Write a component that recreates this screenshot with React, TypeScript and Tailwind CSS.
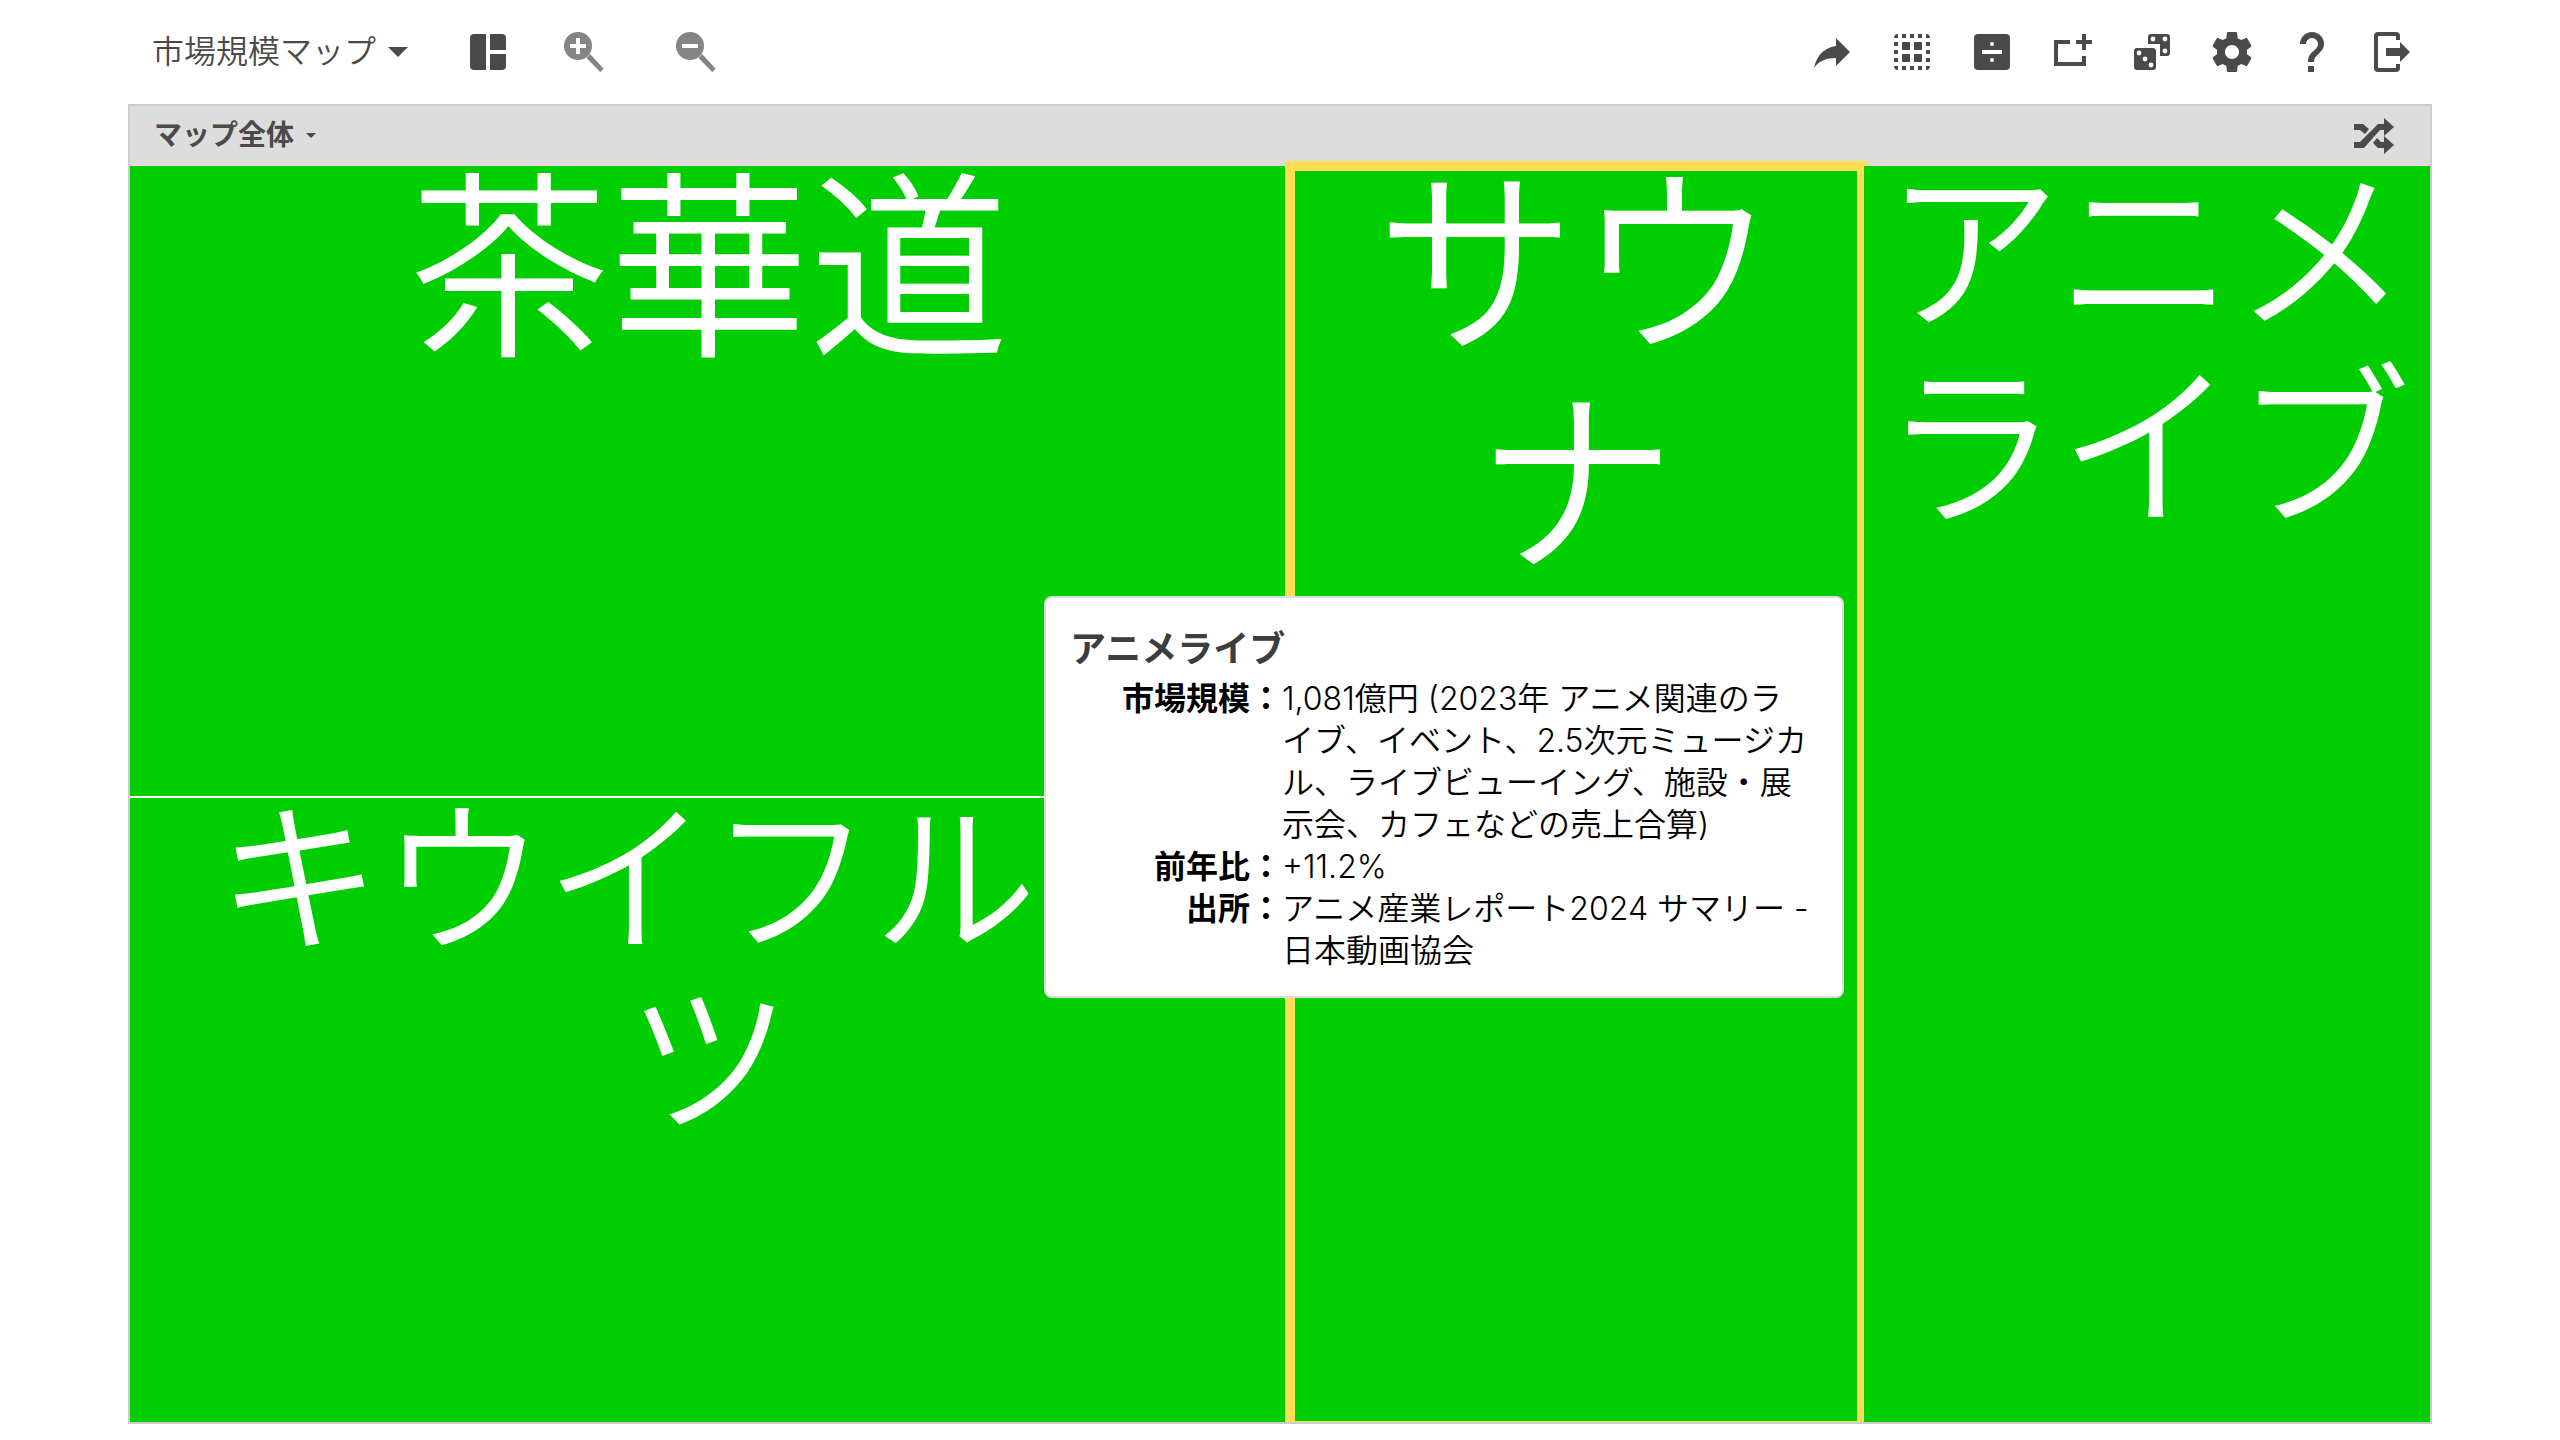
import type { ReactNode } from "react";

const Icon = ({ children }: { children: ReactNode }) => (
	<svg viewBox="0 0 48 48" fill="currentColor" fillRule="evenodd" aria-hidden="true" className="size-12 shrink-0">
		{children}
	</svg>
);

const gearPath =
	"M38.86 25.95c.08-.64.14-1.29.14-1.95s-.06-1.31-.14-1.95l4.23-3.31c.38-.3.49-.84.24-1.28l-4-6.93c-.25-.43-.77-.61-1.22-.43l-4.98 2.01c-1.03-.79-2.16-1.46-3.38-1.97L29 4.84c-.09-.47-.5-.84-1-.84h-8c-.5 0-.91.37-.99.84l-.75 5.3c-1.22.51-2.35 1.17-3.38 1.97L9.9 10.1c-.45-.17-.97 0-1.22.43l-4 6.93c-.25.43-.14.97.24 1.28l4.22 3.31C9.06 22.69 9 23.34 9 24s.06 1.31.14 1.95l-4.22 3.31c-.38.3-.49.84-.24 1.28l4 6.93c.25.43.77.61 1.22.43l4.98-2.01c1.03.79 2.16 1.46 3.38 1.97l.75 5.3c.08.47.49.84.99.84h8c.5 0 .91-.37.99-.84l.75-5.3c1.22-.51 2.35-1.17 3.38-1.97l4.98 2.01c.45.17.97 0 1.22-.43l4-6.93c.25-.43.14-.97-.24-1.28l-4.22-3.31zM24 31c-3.87 0-7-3.13-7-7s3.13-7 7-7 7 3.13 7 7-3.13 7-7 7z";

const tools = [
	{
		label: "共有",
		icon: <path d="M28 18v-8l14 14-14 14v-8c-10 0-17 3-22 10 2-10 8-20 22-22z" />,
	},
	{
		label: "選択",
		icon: (
			<>
				<path d="M10 6v4H6a4 4 0 0 1 4-4zM38 6a4 4 0 0 1 4 4h-4zM6 38h4v4a4 4 0 0 1-4-4zM38 38h4a4 4 0 0 1-4 4z" />
				<path d="M14 6h4v4h-4zM22 6h4v4h-4zM30 6h4v4h-4zM14 38h4v4h-4zM22 38h4v4h-4zM30 38h4v4h-4z" />
				<path d="M6 14h4v4H6zM6 22h4v4H6zM6 30h4v4H6zM38 14h4v4h-4zM38 22h4v4h-4zM38 30h4v4h-4z" />
				<path d="M14 14h8v8h-8zM26 14h8v8h-8zM14 26h8v8h-8zM26 26h8v8h-8z" />
			</>
		),
	},
	{
		label: "分割",
		icon: (
			<path d="M10 6h28a4 4 0 0 1 4 4v28a4 4 0 0 1-4 4H10a4 4 0 0 1-4-4V10a4 4 0 0 1 4-4zM14 22v4h20v-4zM24 14a2 2 0 1 0 0 4 2 2 0 0 0 0-4zM24 30a2 2 0 1 0 0 4 2 2 0 0 0 0-4z" />
		),
	},
	{
		label: "枠を追加",
		icon: <path d="M6 12h16v4H10v18h24v-6h4v10H6zM34 6h4v6h6v4h-6v6h-4v-6h-6v-4h6z" />,
	},
	{
		label: "ランダム",
		icon: (
			<>
				<path d="M9 20h16a3 3 0 0 1 3 3v16a3 3 0 0 1-3 3H9a3 3 0 0 1-3-3V23a3 3 0 0 1 3-3z" />
				<path d="M23 6h16a3 3 0 0 1 3 3v16a3 3 0 0 1-3 3h-7V16H20V9a3 3 0 0 1 3-3z" />
				<g fill="#fff">
					<circle cx="11" cy="25" r="2.4" />
					<circle cx="17" cy="31" r="2.4" />
					<circle cx="23" cy="37" r="2.4" />
					<circle cx="25" cy="11" r="2.4" />
					<circle cx="37" cy="11" r="2.4" />
					<circle cx="37" cy="23" r="2.4" />
				</g>
			</>
		),
	},
	{ label: "設定", icon: <path d={gearPath} /> },
	{
		label: "ヘルプ",
		icon: <path d="M20 38h6v6h-6zM12 16a12 12 0 0 1 24 0c0 9-10 10-10 18h-6c0-11 10-11 10-18a6 6 0 0 0-12 0z" />,
	},
	{
		label: "ログアウト",
		icon: (
			<path d="M10 4h18a4 4 0 0 1 4 4v4h-4V9a1 1 0 0 0-1-1H11a1 1 0 0 0-1 1v30a1 1 0 0 0 1 1h16a1 1 0 0 0 1-1v-3h4v4a4 4 0 0 1-4 4H10a4 4 0 0 1-4-4V8a4 4 0 0 1 4-4zM18 20h14v-6l10 10-10 10v-6H18z" />
		),
	},
];

const details = [
	{
		term: "市場規模",
		text: "1,081億円 (2023年 アニメ関連のラ\nイブ、イベント、2.5次元ミュージカル、ライブビューイング、施設・展示会、カフェなどの売上合算)",
	},
	{ term: "前年比", text: "+11.2%" },
	{ term: "出所", text: "アニメ産業レポート2024 サマリー - 日本動画協会" },
];

const Toolbar = () => (
	<header className="flex h-[104px] items-center pr-4 pl-6">
		<button type="button" className="flex items-center gap-3 text-[32px] font-[350]">
			市場規模マップ
			<svg viewBox="0 0 20 10" fill="currentColor" aria-hidden="true" className="h-[10px] w-5">
				<path d="M0 0h20L10 10z" />
			</svg>
		</button>
		<button type="button" aria-label="レイアウト" className="ml-14">
			<Icon>
				<path d="M10 6h12v36H10a4 4 0 0 1-4-4V10a4 4 0 0 1 4-4zM26 6h12a4 4 0 0 1 4 4v12H26zM26 26h16v12a4 4 0 0 1-4 4H26z" />
			</Icon>
		</button>
		<button type="button" aria-label="拡大" className="ml-12 text-[#848484]">
			<Icon>
				<path d="M18 4a14 14 0 1 0 0 28 14 14 0 0 0 0-28zM16 10h4v6h6v4h-6v6h-4v-6h-6v-4h6z" />
				<path d="M26.5 30l3.5-4 13.7 14.7-3.4 3.3z" />
			</Icon>
		</button>
		<button type="button" aria-label="縮小" className="ml-16 text-[#848484]">
			<Icon>
				<path d="M18 4a14 14 0 1 0 0 28 14 14 0 0 0 0-28zM10 16h16v4H10z" />
				<path d="M26.5 30l3.5-4 13.7 14.7-3.4 3.3z" />
			</Icon>
		</button>
		<div className="ml-auto flex gap-8">
			{tools.map((tool) => (
				<button key={tool.label} type="button" aria-label={tool.label}>
					<Icon>{tool.icon}</Icon>
				</button>
			))}
		</div>
	</header>
);

const Tooltip = () => (
	<div
		role="tooltip"
		className="absolute top-[430px] left-[914px] z-20 w-[800px] rounded-lg border-2 border-[#ddd] bg-white px-6 pt-6 pb-6 text-left text-black"
	>
		<h2 className="text-[36px] leading-[54px] font-bold text-[#3d3d3d]">アニメライブ</h2>
		<dl className="mt-[2px] grid grid-cols-[212px_1fr] text-[32px] leading-[42px]">
			{details.map(({ term, text }) => (
				<div key={term} className="contents">
					<dt className="text-right font-bold">{term}：</dt>
					<dd className="font-[350] whitespace-pre-line">{text}</dd>
				</div>
			))}
		</dl>
	</div>
);

export default function App() {
	return (
		<div className="flex min-h-screen flex-col bg-white px-32 pb-4 font-['Inter','Noto_Sans_CJK_JP',sans-serif] text-[#4a4a4a]">
			<Toolbar />
			<main className="flex grow flex-col border-2 border-[#ccc]">
				<div className="flex h-[60px] items-center justify-between bg-[#ddd] pr-8 pl-6">
					<button type="button" className="flex items-center gap-3 pb-[2px] text-[28px] font-bold">
						マップ全体
						<svg viewBox="0 0 10 5" fill="currentColor" aria-hidden="true" className="h-[5px] w-[10px]">
							<path d="M0 0h10L5 5z" />
						</svg>
					</button>
					<button type="button" aria-label="シャッフル">
						<Icon>
							<path d="M4 30h6l18-18h6V6l10 9-10 9v-6h-4L14 36H4zM4 12h9l6 5-4 5-5-4H4zM23 31l4-5 4 4h3v-6l10 9-10 9v-6h-6z" />
						</Icon>
					</button>
				</div>
				<div className="relative grid grow grid-cols-[1158fr_576fr_566fr] text-center font-[350] text-white">
					<div className="grid grid-rows-[632fr_624fr]">
						<section className="border-b-2 border-white bg-[#00ce00]">
							<h2 className="-mt-2 text-[200px] leading-[220px]">茶華道</h2>
						</section>
						<section className="bg-[#00ce00] px-8">
							<h2 className="-mt-2 text-[164px] leading-[180px]">キウイフルーツ</h2>
						</section>
					</div>
					<section className="relative bg-[#00ce00]">
						<h2 className="-mt-3 text-[200px] leading-[220px]">サウナ</h2>
						<div className="absolute -inset-x-[3px] -top-[5px] bottom-0 border-10 border-b border-[#ffdd55]" />
					</section>
					<section className="relative bg-[#00ce00]">
						<h2 className="-mt-3 text-[176px] leading-[196px]">アニメライブ</h2>
					</section>
					<Tooltip />
				</div>
			</main>
		</div>
	);
}
